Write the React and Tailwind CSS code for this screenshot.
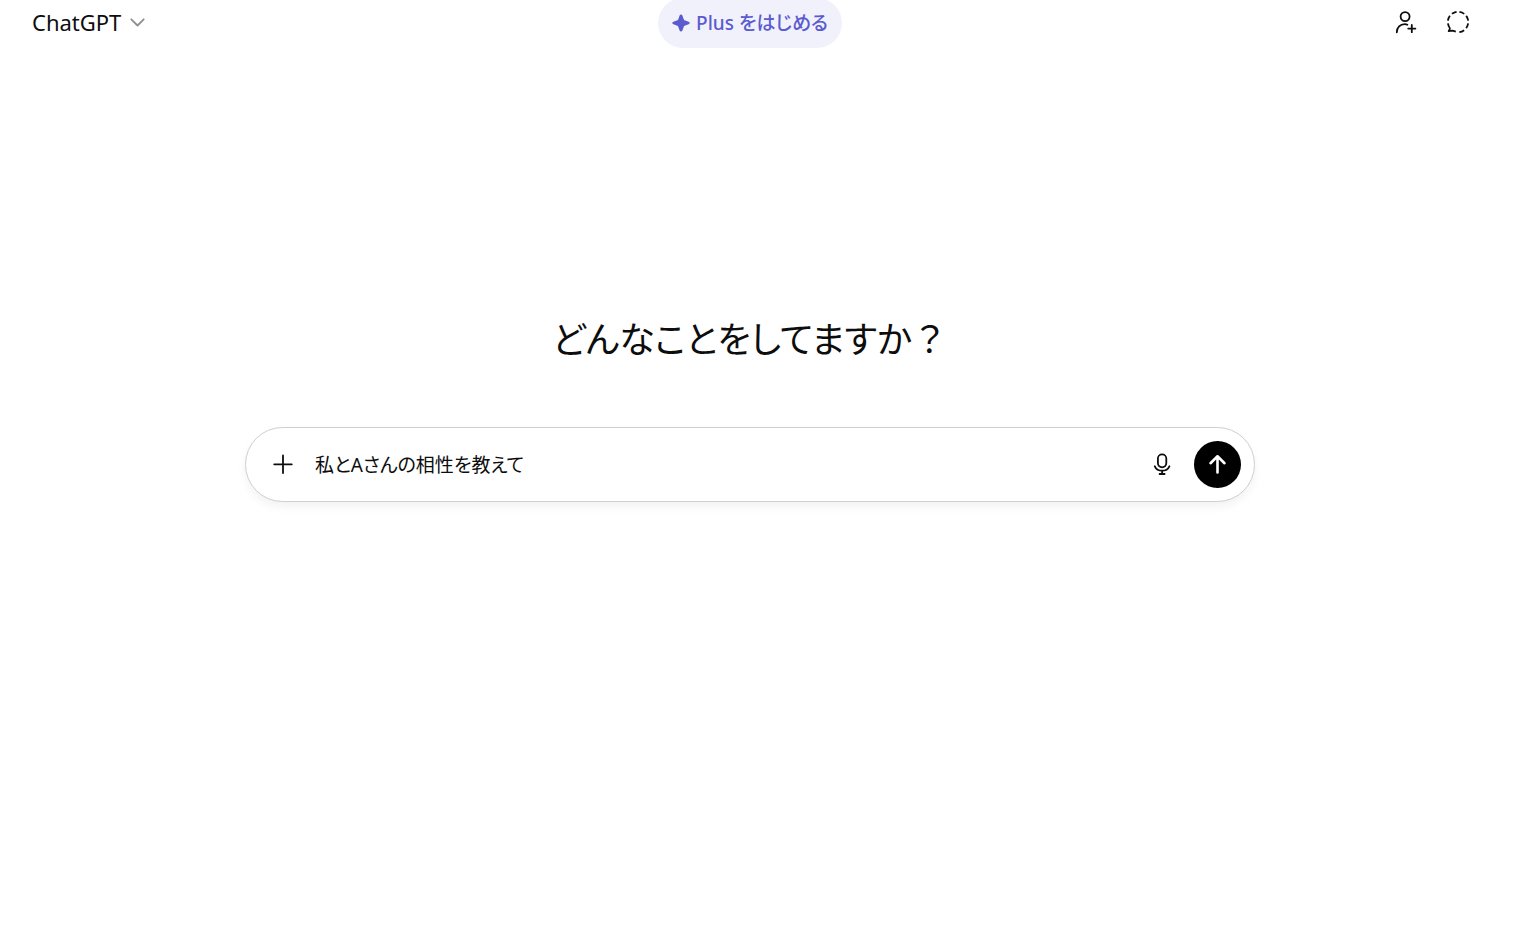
import { useState } from 'react'

const ChevronIcon = () => (
  <svg className="h-4 w-4 text-[#8f8f8f]" viewBox="0 0 16 16" fill="none" stroke="currentColor" strokeWidth="1.8" strokeLinecap="round" strokeLinejoin="round" aria-hidden="true">
    <path d="M2.3 5.3l6.2 6.2 6.2-6.2" />
  </svg>
)

const SparkIcon = () => (
  <svg className="h-[18px] w-[18px]" viewBox="0 0 18 18" fill="currentColor" aria-hidden="true">
    <path d="M9 .5c.7 0 1.1.4 1.4 1.1l1.2 3.300c.3.9.8 1.400 1.700 1.700l3.300 1.100c.7.2 1.100.7 1.100 1.300s-.4 1.100-1.100 1.300l-3.300 1.200c-.9.3-1.400.8-1.700 1.700l-1.200 3.200c-.3.700-.7 1.100-1.400 1.100s-1.100-.4-1.400-1.100l-1.200-3.200c-.3-.9-.8-1.400-1.700-1.700l-3.300-1.200C.7 10.100.3 9.600.3 9s.4-1.100 1.100-1.300l3.300-1.100c.9-.3 1.400-.8 1.700-1.700l1.200-3.300C7.900.9 8.300.5 9 .5z" />
  </svg>
)

const AddPersonIcon = () => (
  <svg className="h-6 w-6" viewBox="0 0 24 24" fill="none" stroke="currentColor" strokeWidth="1.8" strokeLinecap="round" aria-hidden="true">
    <circle cx="11.1" cy="6.6" r="4.5" />
    <path d="M2.8 22.300c0-4.700 3.400-8.100 7.900-8.100 1.100 0 1.900.1 2.700.5M14.200 18.600h7.200M17.800 15v7.200" />
  </svg>
)

const TemporaryChatIcon = () => (
  <svg className="h-6 w-6" viewBox="0 0 24 24" fill="none" stroke="currentColor" strokeWidth="1.8" aria-hidden="true">
    {/* one dash every 45 degrees, the last one is the bubble's tail */}
    <path d="M4.800 19.200A10.200 10.200 0 1 1 12 22.200" pathLength="315" strokeDasharray="29 16" strokeDashoffset="-8" />
    <path d="M4.200 18.200L2.700 21.200 6.500 20.700c1.200.1 1.900.6 3.300.9" strokeLinejoin="round" />
  </svg>
)

const PlusIcon = () => (
  <svg className="h-6 w-6" viewBox="0 0 24 24" fill="none" stroke="currentColor" strokeWidth="1.8" strokeLinecap="round" aria-hidden="true">
    <path d="M12 2.500v17.600M3.200 11.300h17.600" />
  </svg>
)

const MicIcon = () => (
  <svg className="h-6 w-6" viewBox="0 0 24 24" fill="none" stroke="currentColor" strokeWidth="1.8" strokeLinecap="round" aria-hidden="true">
    <rect x="7.900" y="1.300" width="8.400" height="13" rx="4.200" />
    <path d="M4.800 13.300c1.300 2.900 4 4.400 7.300 4.400s6-1.500 7.300-4.400M12.100 17.700v3.300M9.600 21h5" />
  </svg>
)

const ArrowUpIcon = () => (
  <svg className="h-6 w-6" viewBox="0 0 24 24" fill="none" stroke="currentColor" strokeWidth="2.6" strokeLinecap="round" strokeLinejoin="round" aria-hidden="true">
    <path d="M11.500 19.500v-16M4.500 10.200l7-6.900 7 6.900" />
  </svg>
)

const Header = () => (
  <header className="grid h-12 grid-cols-[1fr_auto_1fr] grid-rows-[48px] items-end">
    <button type="button" className="flex h-12 items-center gap-2 justify-self-start pb-1 pl-8 text-[22px] leading-8">
      ChatGPT
      <ChevronIcon />
    </button>
    <button type="button" className="flex h-[50px] items-center gap-1.5 rounded-full bg-[#f1f1fb] px-3.5 text-[19px] font-medium text-[#5b5bd0]">
      <SparkIcon />
      Plus をはじめる
    </button>
    <div className="flex h-12 items-center gap-7 justify-self-end pr-[30px] pb-1">
      <button type="button" aria-label="グループチャットを開始">
        <AddPersonIcon />
      </button>
      <button type="button" aria-label="一時チャット">
        <TemporaryChatIcon />
      </button>
    </div>
  </header>
)

const Composer = () => {
  const [message, setMessage] = useState('私とAさんの相性を教えて')

  return (
    <form
      onSubmit={(e) => e.preventDefault()}
      className="flex w-full max-w-[1010px] items-center rounded-full border border-[#cfcfcf] bg-white py-[13px] pr-[13px] pl-[25px] shadow-[0_5px_10px_rgba(0,0,0,0.05)]"
    >
      <button type="button" aria-label="ファイルを追加" className="mr-5">
        <PlusIcon />
      </button>
      <input
        type="text"
        aria-label="メッセージ"
        value={message}
        onChange={(e) => setMessage(e.target.value)}
        className="min-w-0 flex-1 bg-transparent text-[19px] leading-8 outline-none"
      />
      <button type="button" aria-label="音声入力" className="mx-5">
        <MicIcon />
      </button>
      <button type="submit" aria-label="送信" className="flex h-[47px] w-[47px] items-center justify-center rounded-full bg-black text-white">
        <ArrowUpIcon />
      </button>
    </form>
  )
}

const App = () => {
  return (
    <div className="min-h-screen bg-white pr-3.5 font-['Noto_Sans','Noto_Sans_CJK_JP',sans-serif] text-[#0d0d0d] [font-feature-settings:'palt']">
      <Header />
      <main className="flex flex-col items-center px-8 pt-[264px]">
        <h1 className="mb-[59px] text-[36px] leading-[56px]">
          どんなことをしてますか
          <span className="[font-feature-settings:normal]">？</span>
        </h1>
        <Composer />
      </main>
    </div>
  )
}

export default App
